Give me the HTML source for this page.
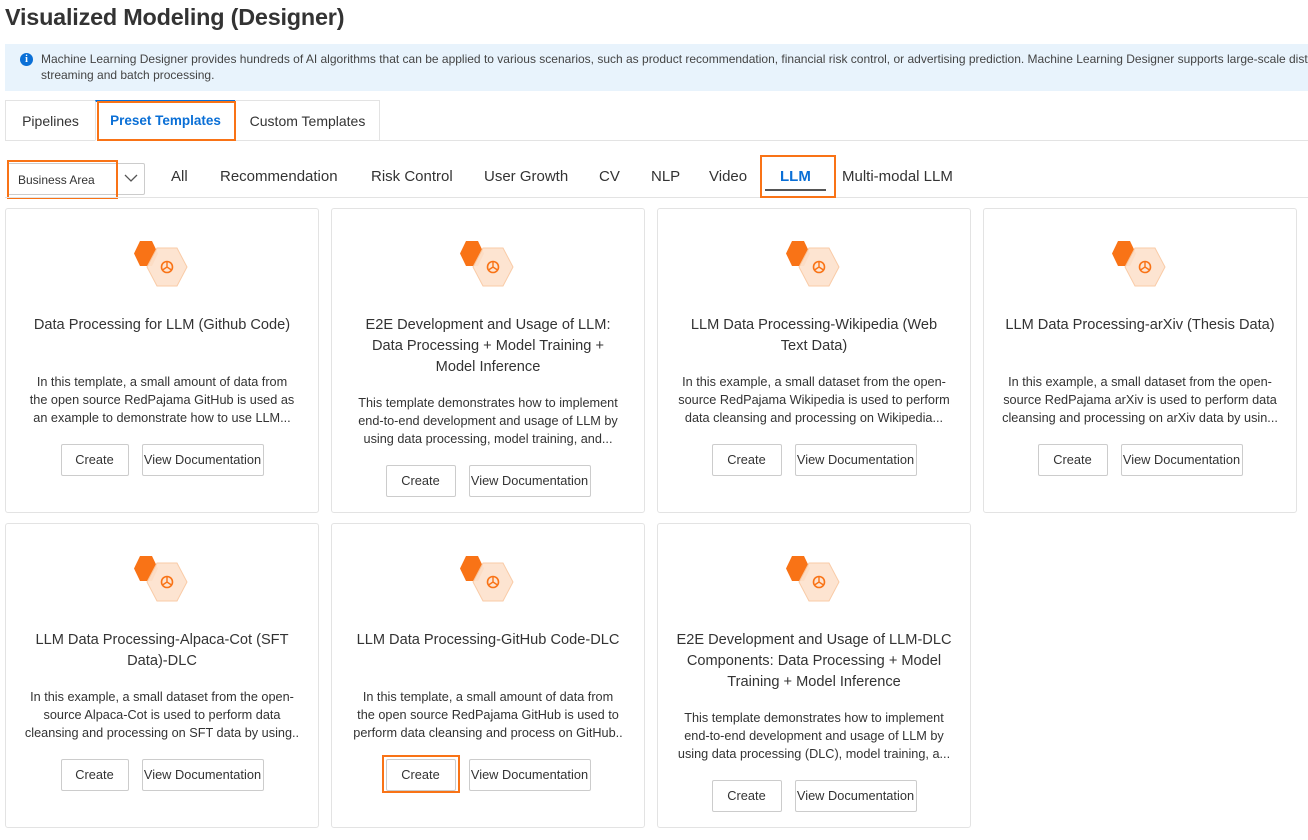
<!DOCTYPE html>
<html><head><meta charset="utf-8">
<style>
*{box-sizing:border-box;margin:0;padding:0}
body{width:1308px;height:840px;overflow:hidden;background:#fff;font-family:"Liberation Sans",sans-serif;color:#333;position:relative}
.abs{position:absolute}
h1{position:absolute;left:5px;top:4px;font-size:23.4px;font-weight:bold;color:#333;letter-spacing:-0.2px}
.info{position:absolute;left:5px;top:44px;width:1310px;height:47px;background:#e8f3fc;font-size:12px;line-height:16px;color:#444;padding:7px 0 0 36px;white-space:nowrap}
.info .ic{position:absolute;left:15px;top:9px;width:13px;height:13px;border-radius:50%;background:#0a6fd6;color:#fff;font-size:10px;font-weight:bold;text-align:center;line-height:13px;font-family:"Liberation Serif",serif}
.tab{position:absolute;top:100px;height:41px;border:1px solid #e3e3e3;font-size:14px;line-height:40px;text-align:center;color:#333;background:#fff}
.tabline{position:absolute;left:5px;right:0;top:140px;height:1px;background:#e3e3e3}
.ob{position:absolute;border:2px solid #f97316}
.ft{position:absolute;top:166px;font-size:15px;line-height:22px;color:#333}
.card{position:absolute;width:314px;height:305px;border:1px solid #e3e3e3;border-radius:3px;text-align:center}
.card svg{position:absolute;left:128px;top:32px}
.ttl{position:absolute;left:10px;right:10px;top:106px;font-size:14.6px;line-height:21px;color:#333}
.desc{font-size:12.7px;line-height:18px;color:#333;margin-top:37px}
.m16{margin-top:16px}
.btns{margin-top:17px;display:flex;justify-content:center;gap:13px}
.b{height:32px;border:1px solid #ccc;border-radius:2px;font-size:12.8px;line-height:30px;color:#333;background:#fff;white-space:nowrap}
</style></head><body>
<h1>Visualized Modeling (Designer)</h1>
<div class="info"><span class="ic">i</span>Machine Learning Designer provides hundreds of AI algorithms that can be applied to various scenarios, such as product recommendation, financial risk control, or advertising prediction. Machine Learning Designer supports large-scale distributed<br>streaming and batch processing.</div>

<div class="tabline"></div>
<div class="tab" style="left:5px;width:91px">Pipelines</div>
<div class="tab" style="left:95px;width:141px;border-top:2px solid #0a6fd6;border-bottom-color:#fff;color:#0a6fd6;font-weight:bold;line-height:38px;font-size:13.5px">Preset Templates</div>
<div class="tab" style="left:235px;width:145px">Custom Templates</div>
<div class="ob" style="left:97px;top:101px;width:139px;height:40px"></div>

<div class="abs" style="left:7px;top:163px;width:138px;height:32px;border:1px solid #ccc;border-radius:2px"></div>
<div class="abs" style="left:117px;top:164px;width:1px;height:30px;background:#ddd"></div>
<div class="abs" style="left:18px;top:173px;font-size:12px;color:#333">Business Area</div>
<svg class="abs" style="left:124px;top:173px" width="14" height="10"><path d="M1 2 L7 8 L13 2" fill="none" stroke="#555" stroke-width="1.3"/></svg>
<div class="ob" style="left:7px;top:160px;width:111px;height:39px"></div>

<div class="ft" style="left:171px">All</div>
<div class="ft" style="left:220px">Recommendation</div>
<div class="ft" style="left:371px">Risk Control</div>
<div class="ft" style="left:484px">User Growth</div>
<div class="ft" style="left:599px">CV</div>
<div class="ft" style="left:651px">NLP</div>
<div class="ft" style="left:709px">Video</div>
<div class="ft" style="left:780px;color:#0a6fd6;font-weight:bold">LLM</div>
<div class="ft" style="left:842px">Multi-modal LLM</div>
<div class="abs" style="left:765px;top:189px;width:61px;height:2px;background:#555"></div>
<div class="abs" style="left:5px;right:0;top:197px;height:1px;background:#e3e3e3"></div>
<div class="ob" style="left:760px;top:155px;width:76px;height:43px"></div>

<svg width="0" height="0" style="position:absolute"><defs>
<g id="ic">
<polygon points="6,0 18,0 24,12.5 18,25 6,25 0,12.5" fill="#f97316"/>
<polygon points="23,7 43,7 53,26 43,45 23,45 13,26" fill="#fde3cf" stroke="#f9c9a3" stroke-width="1" opacity="0.95"/>
<circle cx="33" cy="26" r="5.5" fill="none" stroke="#f97316" stroke-width="1.6"/>
<path d="M33 20.5 L33 26 M28.5 29 L33 26 L37.5 29" stroke="#f97316" stroke-width="1.4" fill="none"/>
</g></defs></svg>

<!-- Row 1 -->
<div class="card" style="left:5px;top:208px"><svg width="60" height="50"><use href="#ic"/></svg>
<div class="ttl">Data Processing for LLM (Github Code)
<div class="desc">In this template, a small amount of data from<br>the open source RedPajama GitHub is used as<br>an example to demonstrate how to use LLM...</div>
<div class="btns"><div class="b" style="width:68px">Create</div><div class="b" style="width:122px">View Documentation</div></div></div></div>

<div class="card" style="left:331px;top:208px"><svg width="60" height="50"><use href="#ic"/></svg>
<div class="ttl">E2E Development and Usage of LLM:<br>Data Processing + Model Training +<br>Model Inference
<div class="desc m16">This template demonstrates how to implement<br>end-to-end development and usage of LLM by<br>using data processing, model training, and...</div>
<div class="btns"><div class="b" style="width:70px">Create</div><div class="b" style="width:122px">View Documentation</div></div></div></div>

<div class="card" style="left:657px;top:208px"><svg width="60" height="50"><use href="#ic"/></svg>
<div class="ttl">LLM Data Processing-Wikipedia (Web<br>Text Data)
<div class="desc m16">In this example, a small dataset from the open-<br>source RedPajama Wikipedia is used to perform<br>data cleansing and processing on Wikipedia...</div>
<div class="btns"><div class="b" style="width:70px">Create</div><div class="b" style="width:122px">View Documentation</div></div></div></div>

<div class="card" style="left:983px;top:208px"><svg width="60" height="50"><use href="#ic"/></svg>
<div class="ttl">LLM Data Processing-arXiv (Thesis Data)
<div class="desc">In this example, a small dataset from the open-<br>source RedPajama arXiv is used to perform data<br>cleansing and processing on arXiv data by usin...</div>
<div class="btns"><div class="b" style="width:70px">Create</div><div class="b" style="width:122px">View Documentation</div></div></div></div>

<!-- Row 2 -->
<div class="card" style="left:5px;top:523px"><svg width="60" height="50"><use href="#ic"/></svg>
<div class="ttl">LLM Data Processing-Alpaca-Cot (SFT<br>Data)-DLC
<div class="desc m16">In this example, a small dataset from the open-<br>source Alpaca-Cot is used to perform data<br>cleansing and processing on SFT data by using..</div>
<div class="btns"><div class="b" style="width:68px">Create</div><div class="b" style="width:122px">View Documentation</div></div></div></div>

<div class="card" style="left:331px;top:523px"><svg width="60" height="50"><use href="#ic"/></svg>
<div class="ttl">LLM Data Processing-GitHub Code-DLC
<div class="desc">In this template, a small amount of data from<br>the open source RedPajama GitHub is used to<br>perform data cleansing and process on GitHub..</div>
<div class="btns"><div class="b" style="width:70px">Create</div><div class="b" style="width:122px">View Documentation</div></div></div></div>

<div class="card" style="left:657px;top:523px"><svg width="60" height="50"><use href="#ic"/></svg>
<div class="ttl">E2E Development and Usage of LLM-DLC<br>Components: Data Processing + Model<br>Training + Model Inference
<div class="desc m16">This template demonstrates how to implement<br>end-to-end development and usage of LLM by<br>using data processing (DLC), model training, a...</div>
<div class="btns"><div class="b" style="width:70px">Create</div><div class="b" style="width:122px">View Documentation</div></div></div></div>

<div class="ob" style="left:382px;top:755px;width:78px;height:38px"></div>
</body></html>
